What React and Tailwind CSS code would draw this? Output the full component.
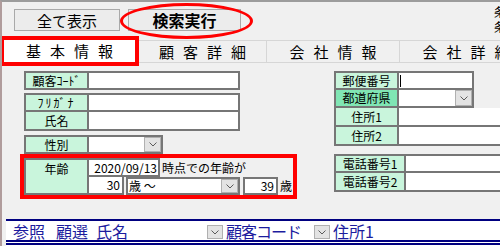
import React from "react";

function Drop({ className }) {
  return (
    <div
      className={`shrink-0 flex items-center justify-center bg-[#e3e3e3] border border-[#b0b0b0] ${className}`}
    >
      <svg width="8" height="5" viewBox="0 0 8 5">
        <path d="M0.5 0.5 L4 4 L7.5 0.5" fill="none" stroke="#5a5a5a" strokeWidth="1" />
      </svg>
    </div>
  );
}

function Row({ label, lw = "w-[65px]", iw = "w-[151px]", h = "h-[19px]", noTop, dark, children }) {
  return (
    <div className={`flex shrink-0 ${h}`}>
      <div
        className={`shrink-0 ${lw} ${dark ? "bg-[#80e6b4]" : "bg-[#c9f5dc]"} border-2 ${
          noTop ? "border-t-0" : ""
        } border-[#767676] flex items-center justify-center text-[12px] leading-none text-black`}
      >
        {label}
      </div>
      <div
        className={`shrink-0 ${iw} bg-white border-2 border-l-0 ${
          noTop ? "border-t-0" : ""
        } border-[#767676] flex items-center`}
      >
        {children}
      </div>
    </div>
  );
}

function TabText({ text }) {
  return (
    <div className="flex gap-[9px] text-[15px] leading-none text-black">
      {text.split("").map((c, i) => (
        <span key={i}>{c}</span>
      ))}
    </div>
  );
}

export default function App() {
  return (
    <div className="w-[500px] h-[246px] overflow-hidden bg-[#f0f0f0] border-t-2 border-l-2 border-t-[#9c9c9c] border-l-[#b09c9c] flex flex-col font-['Noto_Sans_CJK_JP','Noto_Sans',sans-serif] text-black">
      {/* header */}
      <div className="h-[34px] shrink-0 flex items-start pt-[7px]">
        <div className="ml-[12px] w-[106px] h-[22px] shrink-0 bg-[#ececec] border border-[#a9a9a9] flex items-center justify-center text-[15px] leading-none">
          全て表示
        </div>
        <div className="relative ml-[8px] w-[113px] h-[22px] shrink-0">
          <div className="w-full h-full bg-[#ececec] border border-[#a9a9a9] flex items-center justify-center text-[16px] font-bold leading-none">
            検索実行
          </div>
          <div className="absolute -left-[8px] -top-[6px] w-[133px] h-[36px] rounded-[50%] border-[3px] border-[#ff0000]" />
        </div>
        <div className="ml-auto w-[6px] shrink-0 overflow-hidden -mt-[3px]">
          <div className="w-[14px] text-[12px] leading-[12px] flex flex-col gap-[3px]">
            <div>条</div>
            <div>条</div>
          </div>
        </div>
      </div>

      {/* tabs */}
      <div className="h-[30px] shrink-0 flex">
        <div className="-ml-[2px] w-[139px] h-[30px] shrink-0 border-4 border-[#ff0000] bg-white flex items-center justify-center pb-[2px]">
          <TabText text="基本情報" />
        </div>
        <div className="mt-[4px] w-[128px] h-[23px] shrink-0 border-y border-r border-[#d6d6d6] flex items-center justify-center pb-[1px]">
          <TabText text="顧客詳細" />
        </div>
        <div className="mt-[4px] w-[133px] h-[23px] shrink-0 border-y border-r border-[#d6d6d6] flex items-center justify-center pb-[1px]">
          <TabText text="会社情報" />
        </div>
        <div className="mt-[4px] w-[133px] h-[23px] shrink-0 border-y border-r border-[#d6d6d6] flex items-center justify-center pb-[1px]">
          <TabText text="会社詳細" />
        </div>
      </div>

      {/* body */}
      <div className="flex-1 flex min-h-0">
        {/* left column */}
        <div className="ml-[18px] w-[277px] shrink-0 pt-[5px] flex flex-col">
          <div className="ml-[4px] flex flex-col">
            <Row label="顧客ｺｰﾄﾞ" />
            <div className="mt-[3px]">
              <Row label={<span className="tracking-[2px]">ﾌﾘｶﾞﾅ</span>} />
            </div>
            <Row label="氏名" noTop />
            <div className="mt-[4px]">
              <Row label="性別" iw="w-[74px]">
                <div className="flex-1" />
                <Drop className="w-[17px] h-full" />
              </Row>
            </div>
          </div>
          <div className="flex border-4 border-[#ff0000] h-[45px] w-[277px]">
            <div className="shrink-0 w-[65px] h-[37px] bg-[#c9f5dc] border-2 border-[#767676] flex justify-center pt-[3px] text-[12px] leading-[12px]">
              年齢
            </div>
            <div className="flex flex-col">
              <div className="flex h-[19px] items-center">
                <div className="shrink-0 w-[71px] h-full bg-white border-2 border-l-0 border-[#767676] flex items-center justify-end pr-[1px] text-[12px] leading-none">
                  2020/09/13
                </div>
                <span className="ml-[2px] text-[12px] leading-none whitespace-nowrap">時点での年齢が</span>
              </div>
              <div className="flex h-[18px] items-center">
                <div className="shrink-0 w-[35px] h-full bg-white border-2 border-l-0 border-t-0 border-[#767676] flex items-center justify-end pr-[2px] text-[12px] leading-none">
                  30
                </div>
                <div className="shrink-0 ml-[2px] w-[114px] h-full bg-white border-2 border-[#767676] flex items-center">
                  <span className="pl-[1px] text-[12px] leading-none whitespace-nowrap">歳 〜</span>
                  <div className="flex-1" />
                  <Drop className="w-[17px] h-full" />
                </div>
                <div className="shrink-0 ml-[3px] w-[35px] h-full bg-white border-2 border-[#767676] flex items-center justify-end pr-[2px] text-[12px] leading-none">
                  39
                </div>
                <span className="ml-[2px] text-[12px] leading-none">歳</span>
              </div>
            </div>
          </div>
        </div>

        {/* right column */}
        <div className="ml-[37px] shrink-0 pt-[5px] flex flex-col">
          <Row label="郵便番号" iw="w-[75px]">
            <div className="ml-[1px] w-px h-[12px] bg-black" />
          </Row>
          <Row label="都道府県" iw="w-[75px]" h="h-[18px]" noTop dark>
            <div className="flex-1" />
            <Drop className="w-[17px] h-full" />
          </Row>
          <Row label="住所1" iw="w-[120px]" noTop />
          <Row label="住所2" iw="w-[120px]" noTop />
          <div className="mt-[8px]">
            <Row label="電話番号1" lw="w-[72px]" iw="w-[120px]" />
          </div>
          <Row label="電話番号2" lw="w-[72px]" iw="w-[120px]" noTop />
        </div>
      </div>

      {/* bottom bar */}
      <div className="ml-[4px] h-[27px] shrink-0 flex flex-col bg-white">
        <div className="h-[2px] bg-[#000080]" />
        <div className="h-[19px] flex items-end text-[16px] leading-[18px] text-[#1c1c9e] whitespace-nowrap">
          <span className="ml-[7px]">参照</span>
          <span className="ml-[11px]">顧選</span>
          <span className="ml-[8px]">氏名</span>
          <Drop className="ml-[79px] w-[16px] h-[14px] mb-[1px]" />
          <span className="ml-[3px] tracking-[-1px]">顧客コード</span>
          <Drop className="ml-[13px] w-[16px] h-[14px] mb-[1px]" />
          <span className="ml-[3px]">住所1</span>
        </div>
        <div className="h-[2px] bg-[#000080]" />
        <div className="h-[1px]" />
        <div className="h-[2px] bg-[#000080]" />
      </div>
    </div>
  );
}
